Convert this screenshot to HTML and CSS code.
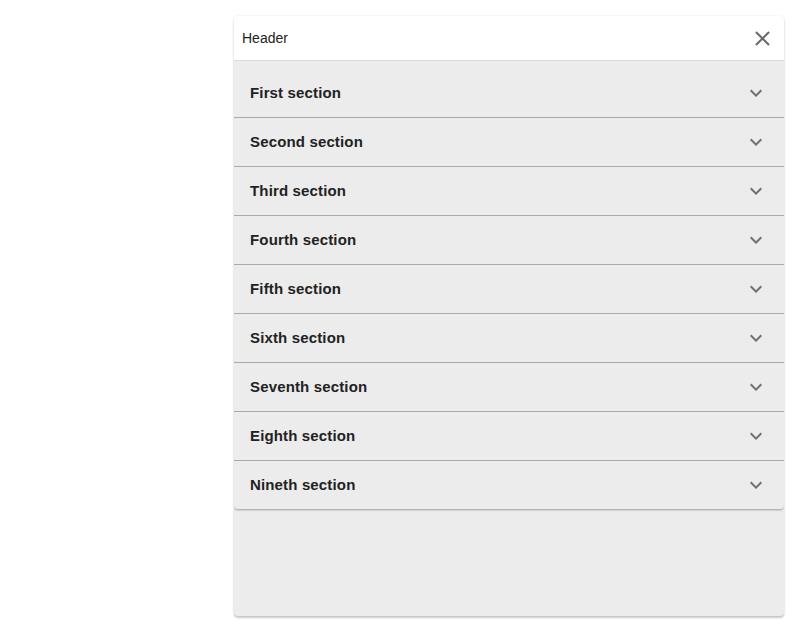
FILE: index.html
```html
<!DOCTYPE html>
<html>
<head>
<meta charset="utf-8">
<link rel="stylesheet" href="styles.css">
</head>
<body>
<div class="panel">
  <div class="header">
    <span class="title">Header</span>
    <button class="close" aria-label="close">
      <svg viewBox="0 0 24 24" width="24" height="24"><path d="M19 6.41L17.59 5 12 10.59 6.41 5 5 6.41 10.59 12 5 17.59 6.41 19 12 13.41 17.59 19 19 17.59 13.41 12z"/></svg>
    </button>
  </div>
  <div class="content">
    <div class="list">
      <div class="item"><span class="label">First section</span><svg class="chev" viewBox="0 0 24 24"><path d="M16.59 8.59L12 13.17 7.41 8.59 6 10l6 6 6-6z"/></svg></div>
      <div class="item"><span class="label">Second section</span><svg class="chev" viewBox="0 0 24 24"><path d="M16.59 8.59L12 13.17 7.41 8.59 6 10l6 6 6-6z"/></svg></div>
      <div class="item"><span class="label">Third section</span><svg class="chev" viewBox="0 0 24 24"><path d="M16.59 8.59L12 13.17 7.41 8.59 6 10l6 6 6-6z"/></svg></div>
      <div class="item"><span class="label">Fourth section</span><svg class="chev" viewBox="0 0 24 24"><path d="M16.59 8.59L12 13.17 7.41 8.59 6 10l6 6 6-6z"/></svg></div>
      <div class="item"><span class="label">Fifth section</span><svg class="chev" viewBox="0 0 24 24"><path d="M16.59 8.59L12 13.17 7.41 8.59 6 10l6 6 6-6z"/></svg></div>
      <div class="item"><span class="label">Sixth section</span><svg class="chev" viewBox="0 0 24 24"><path d="M16.59 8.59L12 13.17 7.41 8.59 6 10l6 6 6-6z"/></svg></div>
      <div class="item"><span class="label">Seventh section</span><svg class="chev" viewBox="0 0 24 24"><path d="M16.59 8.59L12 13.17 7.41 8.59 6 10l6 6 6-6z"/></svg></div>
      <div class="item"><span class="label">Eighth section</span><svg class="chev" viewBox="0 0 24 24"><path d="M16.59 8.59L12 13.17 7.41 8.59 6 10l6 6 6-6z"/></svg></div>
      <div class="item"><span class="label">Nineth section</span><svg class="chev" viewBox="0 0 24 24"><path d="M16.59 8.59L12 13.17 7.41 8.59 6 10l6 6 6-6z"/></svg></div>
    </div>
  </div>
</div>
</body>
</html>
```
FILE: styles.css
```css
html, body {
  margin: 0;
  padding: 0;
  background: #ffffff;
}
body {
  padding: 16px 16px 16px 234px;
  font-family: "Liberation Sans", Arial, sans-serif;
}
.panel {
  width: 550px;
  height: 600px;
  background: #ececec;
  border-radius: 4px;
  box-shadow: 0 2px 2px rgba(0,0,0,0.2), 0 0 3px rgba(0,0,0,0.08);
  display: flex;
  flex-direction: column;
  overflow: hidden;
}
.header {
  height: 44px;
  background: #ffffff;
  border-bottom: 1px solid #dcdcdc;
  display: flex;
  align-items: center;
  justify-content: space-between;
  padding: 0 10px 0 8px;
  flex: none;
}
.title {
  font-size: 14px;
  color: #222;
}
.close {
  border: 0;
  background: none;
  padding: 0;
  width: 24px;
  height: 24px;
  display: flex;
}
.close svg {
  fill: #6b6b6b;
  width: 25px;
  height: 25px;
  margin: -0.5px;
}
.content {
  padding-top: 8px;
}
.list {
  border-radius: 0 0 4px 4px;
  box-shadow: 0 1px 1px rgba(0,0,0,0.12);
}
.item {
  height: 48px;
  border-bottom: 1px solid #a9a9a9;
  display: flex;
  align-items: center;
  justify-content: space-between;
  padding: 0 16px;
  font-size: 15px;
  font-weight: bold;
  color: #222;
}
.label {
  letter-spacing: 0.15px;
  margin-bottom: 2px;
}
.item:last-child {
  border-radius: 0 0 4px 4px;
  border-bottom-color: #b5b5b5;
}
.chev {
  width: 24px;
  height: 24px;
  fill: #707070;
}
```
